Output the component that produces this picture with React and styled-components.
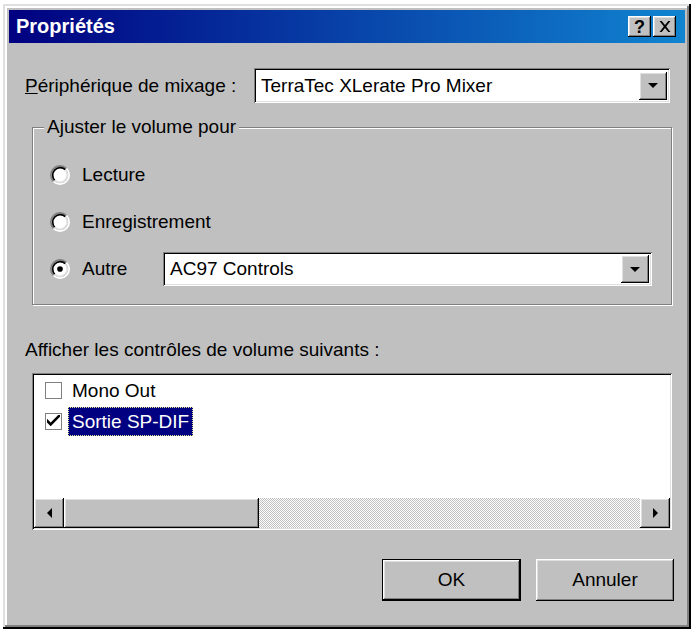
import React from "react"
import styled, { createGlobalStyle } from "styled-components"

const GlobalStyle = createGlobalStyle`
  html, body {
    margin: 0;
    padding: 0;
    background: #ffffff;
  }
  body {
    font-family: "Liberation Sans", Arial, sans-serif;
    font-size: 19px;
    color: #000;
  }
`

const raised = `
  background: #c0c0c0;
  box-shadow: inset -1px -1px #000, inset 1px 1px #fff,
    inset -2px -2px #808080, inset 2px 2px #dfdfdf;
`

const sunken = `
  box-shadow: inset 1px 1px #808080, inset -1px -1px #fff,
    inset 2px 2px #000, inset -2px -2px #dfdfdf;
`

const Window = styled.div`
  box-sizing: border-box;
  width: 688px;
  height: 625px;
  margin: 4px 0 0 3px;
  padding: 6px;
  background: #c0c0c0;
  box-shadow: inset -2px -2px #000, inset 2px 2px #dfdfdf,
    inset -4px -4px #808080, inset 4px 4px #fff;
  display: flex;
  flex-direction: column;
`

const TitleBar = styled.div`
  height: 33px;
  flex-shrink: 0;
  display: flex;
  align-items: center;
  justify-content: space-between;
  padding: 0 9px 0 7px;
  background: linear-gradient(to right, #000080, #1084d0);
`

const Title = styled.span`
  color: #fff;
  font-weight: bold;
  font-size: 20px;
`

const TitleButtons = styled.div`
  display: flex;
  gap: 2px;
`

const TitleButton = styled.div`
  ${raised}
  width: 23px;
  height: 21px;
  display: flex;
  align-items: center;
  justify-content: center;
  font-weight: bold;
  font-size: 18px;
  line-height: 1;
`

const Row = styled.div`
  display: flex;
  align-items: center;
  margin-top: 25px;
  padding: 0 15px 0 16px;
`

const Label = styled.span`
  line-height: 20px;
  white-space: nowrap;
  u {
    text-decoration: underline;
  }
`

const Combo = styled.div`
  ${sunken}
  box-sizing: border-box;
  width: ${p => p.$width}px;
  height: ${p => p.$height}px;
  margin-left: auto;
  padding: 3px 3px 3px 7px;
  background: #fff;
  display: flex;
  align-items: center;
  justify-content: space-between;
`

const DropButton = styled.div`
  ${raised}
  width: 28px;
  height: 28px;
  display: flex;
  align-items: center;
  justify-content: center;
`

const Group = styled.fieldset`
  margin: 14px 13px 0 23px;
  padding: 21px 19px 18px 17px;
  border: 1px solid #808080;
  box-shadow: inset 1px 1px #fff, 1px 1px #fff;
  display: flex;
  flex-direction: column;
  gap: 13px;
`

const Legend = styled.legend`
  margin-left: -6px;
  padding: 0 3px;
  line-height: 20px;
  background: #c0c0c0;
`

const RadioRow = styled.div`
  display: flex;
  align-items: center;
  height: 34px;
  gap: 12px;
`

const Caption = styled.div`
  margin-top: 35px;
  padding-left: 16px;
  line-height: 20px;
`

const List = styled.div`
  ${sunken}
  box-sizing: border-box;
  height: 157px;
  margin: 13px 13px 0 23px;
  padding: 2px;
  background: #fff;
  display: flex;
  flex-direction: column;
`

const Item = styled.div`
  height: 31px;
  display: flex;
  align-items: center;
  padding-left: 11px;
  gap: 6px;
`

const Check = styled.div`
  box-sizing: border-box;
  width: 17px;
  height: 17px;
  border: 1px solid #808080;
  background: #fff;
  display: flex;
  align-items: center;
  justify-content: center;
`

const ItemText = styled.span`
  box-sizing: border-box;
  height: 29px;
  display: flex;
  align-items: center;
  padding: 0 4px;
  background: ${p => (p.$selected ? "#000080" : "transparent")};
  color: ${p => (p.$selected ? "#fff" : "#000")};
  outline: ${p => (p.$selected ? "1px dotted #e8e890" : "none")};
  outline-offset: -1px;
`

const ScrollBar = styled.div`
  margin-top: auto;
  height: 30px;
  display: flex;
`

const ScrollButton = styled.div`
  ${raised}
  width: 30px;
  height: 30px;
  flex-shrink: 0;
  display: flex;
  align-items: center;
  justify-content: center;
`

const Thumb = styled.div`
  ${raised}
  width: 195px;
  height: 30px;
  flex-shrink: 0;
`

const Track = styled.div`
  flex: 1;
  background: repeating-conic-gradient(#c0c0c0 0 25%, #fff 0 50%) 0 0 / 2px 2px;
`

const Footer = styled.div`
  margin-top: 29px;
  padding-right: 11px;
  display: flex;
  justify-content: flex-end;
  gap: 15px;
`

const Button = styled.div`
  ${raised}
  box-sizing: border-box;
  width: ${p => p.$width}px;
  height: 42px;
  display: flex;
  align-items: center;
  justify-content: center;
  ${p =>
    p.$default &&
    `box-shadow: inset 0 0 0 1px #000, inset -2px -2px #000, inset 2px 2px #fff,
      inset -3px -3px #808080, inset 3px 3px #dfdfdf;`}
`

const Radio = ({ checked }) => (
  <svg width="20" height="20" viewBox="0 0 12 12">
    <circle cx="6" cy="6" r="4.5" fill="#fff" />
    <path d="M2.11 9.89 A5.5 5.5 0 0 1 9.89 2.11" fill="none" stroke="#808080" strokeWidth="1" />
    <path d="M9.89 2.11 A5.5 5.5 0 0 1 2.11 9.89" fill="none" stroke="#fff" strokeWidth="1" />
    <path d="M2.82 9.18 A4.5 4.5 0 0 1 9.18 2.82" fill="none" stroke="#000" strokeWidth="1" />
    <path d="M9.18 2.82 A4.5 4.5 0 0 1 2.82 9.18" fill="none" stroke="#dfdfdf" strokeWidth="1" />
    {checked && <circle cx="6" cy="6" r="1.7" fill="#000" />}
  </svg>
)

const Arrow = ({ dir }) => {
  const pts = {
    down: "0,0 10,0 5,5",
    left: "5,0 5,10 0,5",
    right: "0,0 0,10 5,5",
  }[dir]
  const w = dir === "down" ? 10 : 5
  const h = dir === "down" ? 5 : 10
  return (
    <svg width={w} height={h} viewBox={`0 0 ${w} ${h}`}>
      <polygon points={pts} fill="#000" />
    </svg>
  )
}

const Tick = () => (
  <svg width="13" height="13" viewBox="0 0 7 7">
    <path d="M0 2 L0 4 L2 6 L7 1 L7 -1 L2 4 Z" fill="#000" />
  </svg>
)

const App = () => {
  return (
    <>
      <GlobalStyle />
      <Window>
        <TitleBar>
          <Title>Propriétés</Title>
          <TitleButtons>
            <TitleButton>?</TitleButton>
            <TitleButton>
              <svg width="12" height="11" viewBox="0 0 11 10">
                <path d="M0.5 0 L2.5 0 L5.5 3.6 L8.5 0 L10.5 0 L6.6 5 L10.5 10 L8.5 10 L5.5 6.4 L2.5 10 L0.5 10 L4.4 5 Z" fill="#000" />
              </svg>
            </TitleButton>
          </TitleButtons>
        </TitleBar>

        <Row>
          <Label>
            <u>P</u>ériphérique de mixage :
          </Label>
          <Combo $width={416} $height={35}>
            <span>TerraTec XLerate Pro Mixer</span>
            <DropButton>
              <Arrow dir="down" />
            </DropButton>
          </Combo>
        </Row>

        <Group>
          <Legend>Ajuster le volume pour</Legend>
          <RadioRow>
            <Radio />
            <Label>Lecture</Label>
          </RadioRow>
          <RadioRow>
            <Radio />
            <Label>Enregistrement</Label>
          </RadioRow>
          <RadioRow>
            <Radio checked />
            <Label>Autre</Label>
            <Combo $width={489} $height={34}>
              <span>AC97 Controls</span>
              <DropButton>
                <Arrow dir="down" />
              </DropButton>
            </Combo>
          </RadioRow>
        </Group>

        <Caption>Afficher les contrôles de volume suivants :</Caption>

        <List>
          <Item>
            <Check />
            <ItemText>Mono Out</ItemText>
          </Item>
          <Item>
            <Check>
              <Tick />
            </Check>
            <ItemText $selected>Sortie SP-DIF</ItemText>
          </Item>
          <ScrollBar>
            <ScrollButton>
              <Arrow dir="left" />
            </ScrollButton>
            <Thumb />
            <Track />
            <ScrollButton>
              <Arrow dir="right" />
            </ScrollButton>
          </ScrollBar>
        </List>

        <Footer>
          <Button $width={139} $default>OK</Button>
          <Button $width={138}>Annuler</Button>
        </Footer>
      </Window>
    </>
  )
}

export default App
